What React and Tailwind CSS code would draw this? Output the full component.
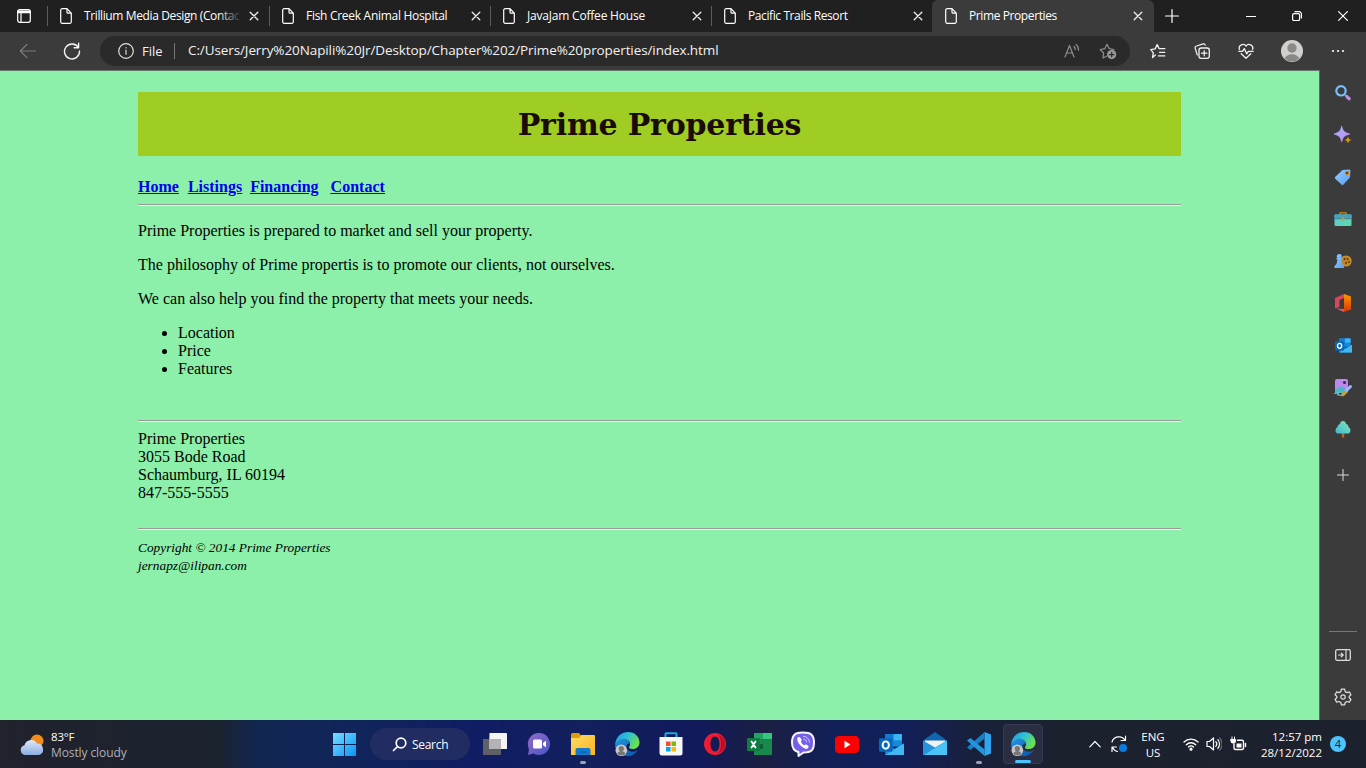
import React from "react";

const ui = "font-['Open_Sans','Noto_Sans',sans-serif]";

function Svg({ w = 16, h, box, className = "", children }) {
  return (
    <svg width={w} height={h || w} viewBox={box || `0 0 ${w} ${h || w}`} fill="none" stroke="currentColor" strokeWidth="1.2" strokeLinecap="round" strokeLinejoin="round" className={"block shrink-0 " + className}>
      {children}
    </svg>
  );
}

function Close() {
  return <Svg w={10} className="text-[#eee]"><path d="M1.2 1.2l7.6 7.6M8.8 1.2l-7.6 7.6" strokeWidth="1.3" /></Svg>;
}

function Page() {
  return <Svg w={12} h={16}><path d="M2.2.7h4.8l4.3 4.5v8.6a1.5 1.5 0 0 1-1.5 1.5H2.2A1.5 1.5 0 0 1 .7 13.8V2.2A1.5 1.5 0 0 1 2.2.7zM7 .9v3.3a1 1 0 0 0 1 1h3.2" /></Svg>;
}

const tabs = [
  ["Trillium Media Design (Contac", "w-[222px]", "tracking-[-0.38px]"],
  ["Fish Creek Animal Hospital", "w-[221px]", "tracking-[-0.29px]"],
  ["JavaJam Coffee House", "w-[221px]", "tracking-[-0.2px]"],
  ["Pacific Trails Resort", "w-[221px]", "tracking-[-0.4px]"],
];

function Tabs() {
  return (
    <div className="flex h-8 w-full bg-[#202020] text-white">
      <div className="flex w-[47px] items-center pl-[17px]">
        <Svg w={14}><rect x=".7" y=".7" width="12.6" height="12.6" rx="2" /><path d="M1 2.4h12M1 3.4h12" strokeWidth="1.8" /><path d="M4 4v9" /></Svg>
      </div>
      {tabs.map(([t, w, tr], i) => (
        <div key={t} className={`flex h-8 items-center ${w}`}>
          <div className="h-5 w-px bg-[#5c5c5c]" />
          <div className="ml-3"><Page /></div>
          <div className={`relative ml-3 w-[158px] whitespace-nowrap text-xs ${tr}`}>
            {t}
            {i === 0 && <div className="absolute right-0 top-0 h-4 w-6 bg-linear-to-r from-transparent to-[#202020]" />}
          </div>
          <div className="ml-[7px]"><Close /></div>
        </div>
      ))}
      <div className="flex h-8 w-[222px] items-center rounded-t-md bg-[#3b3b3b] pl-[13px]">
        <Page />
        <div className="ml-3 w-[156px] text-xs tracking-[-0.4px]">Prime Properties</div>
        <div className="ml-[8px]"><Close /></div>
      </div>
      <div className="flex flex-1 items-center pl-[10px]">
        <Svg w={16}><path d="M8 1.5v13M1.5 8h13" /></Svg>
        <div className="w-[66px]" />
        <Svg w={10}><path d="M.5 5.5h9" /></Svg>
        <div className="w-[36px]" />
        <Svg w={10}><rect x=".6" y="2.6" width="7" height="7" rx="1.5" /><path d="M3 .7h4a2.4 2.4 0 0 1 2.4 2.4V7" /></Svg>
        <div className="w-[36px]" />
        <Svg w={10}><path d="M.6.6l8.8 8.8M9.4.6L.6 9.4" /></Svg>
      </div>
    </div>
  );
}

function Toolbar() {
  return (
    <div className="flex h-[38px] w-full items-center bg-[#3b3b3b] text-[#f2f2f2]">
      <Svg w={18} className="ml-[19px] text-[#7d7d7d]"><path d="M16.5 9H1.5M8 2.3L1.3 9 8 15.7" /></Svg>
      <Svg w={18} className="ml-[26px]"><path d="M15.4 5.5A7.5 7.5 0 1 0 16.5 9M15.6 1.3v4.4h-4.4" strokeWidth="1.4" /></Svg>
      <div className="ml-[19px] flex h-[30px] w-[1030px] items-center rounded-full bg-[#2a2a2a] text-sm">
        <Svg w={16} className="ml-[18px] text-[#ddd]"><circle cx="8" cy="8" r="7.3" /><path d="M8 7.2v4M8 4.7v.2" /></Svg>
        <div className="ml-2 w-[32px] text-[13px]">File</div>
        <div className="h-4 w-px bg-[#777]" />
        <div className="ml-[13px] w-[870px] whitespace-nowrap text-[13.5px] tracking-[-0.1px]">C:/Users/Jerry%20Napili%20Jr/Desktop/Chapter%202/Prime%20properties/index.html</div>
        <Svg w={16} className="ml-[6px] text-[#8e8e8e]"><path d="M1 14L5.5 2.5 10 14M2.7 10h5.8M10 3.5a4 4 0 0 1 1.2 3M12.2 1.5a7 7 0 0 1 2.3 5.7" /></Svg>
        <Svg w={18} className="ml-[19px] text-[#8e8e8e]"><path d="M7.5 14.2L4 16l.6-5L1.2 7.5l4.6-.8L8 2.2l2.3 4.5 4.6.8-1 1" /><circle cx="12.7" cy="12.6" r="4.6" fill="#999" stroke="none" /><path d="M12.7 10.4v4.4M10.5 12.6h4.4" stroke="#2a2a2a" /></Svg>
      </div>
      <Svg w={16} className="ml-[20px]"><path d="M5.4 12L2.5 14.6l.8-4.8L.8 6.6l4.3-.7L7.2 1.5l2 4.2h5.6M9.5 9.3h5.3M8.5 12.9h6.3" strokeWidth="1.3" /></Svg>
      <Svg w={16} className="ml-[28px]"><rect x="5" y="5" width="10.3" height="10.3" rx="2.2" strokeWidth="1.3" /><path d="M10.2 7.5v5.3M7.5 10.2h5.4M3.3 12L1.2 5.3A1.8 1.8 0 0 1 2.5 3L9.2.9a1.8 1.8 0 0 1 2.1 1.3" /></Svg>
      <Svg w={16} className="ml-[28px]"><path d="M1.4 6.3A3.7 3.7 0 0 1 8 3.1a3.7 3.7 0 0 1 6.6 3.2M.8 8.3h3.8L6.3 5.6l2.4 5.2 1.7-2.5h4.8M3.2 10.7L8 15.2l4.8-4.5" strokeWidth="1.3" /></Svg>
      <Svg w={22} className="ml-[27px]"><circle cx="11" cy="11" r="11" fill="#d2d0ce" stroke="none" /><circle cx="11" cy="8" r="4.7" fill="#8b8986" stroke="none" /><path d="M3.7 18.8c1.5-6 13-6 14.6 0a11 11 0 0 1-14.6 0z" fill="#8b8986" stroke="none" /></Svg>
      <Svg w={14} h={4} className="ml-[28px]"><path d="M2 2h.1M7 2h.1M12 2h.1" strokeWidth="2.2" /></Svg>
    </div>
  );
}

function Defs() {
  return (
    <svg width="0" height="0" className="absolute">
      <defs>
        <linearGradient id="bp" x1="0" y1="0" x2="1" y2="1"><stop stopColor="#9bb5ff" /><stop offset="1" stopColor="#cf86f2" /></linearGradient>
        <linearGradient id="bl" x1="0" y1="0" x2="1" y2="1"><stop stopColor="#91ccff" /><stop offset="1" stopColor="#5b9df0" /></linearGradient>
        <linearGradient id="teal" x1="0" y1="0" x2="1" y2="1"><stop stopColor="#59c9dc" /><stop offset="1" stopColor="#5ddba5" /></linearGradient>
        <linearGradient id="tree" x1="1" y1="0" x2="0" y2="1"><stop stopColor="#83e6b8" /><stop offset="1" stopColor="#3fb8d0" /></linearGradient>
        <linearGradient id="win" x1="0" y1="0" x2="1" y2="1"><stop stopColor="#77ddff" /><stop offset="1" stopColor="#0895f5" /></linearGradient>
        <linearGradient id="edgeTop" x1="0" y1="0" x2="1" y2=".5"><stop stopColor="#2396df" /><stop offset=".5" stopColor="#2fc0d8" /><stop offset="1" stopColor="#6be04e" /></linearGradient>
        <linearGradient id="edgeBot" x1="0" y1="0" x2="1" y2="1"><stop stopColor="#239be4" /><stop offset="1" stopColor="#0b4fa8" /></linearGradient>
        <linearGradient id="cloud" x1="0" y1="0" x2="0" y2="1"><stop stopColor="#dce9fb" /><stop offset="1" stopColor="#8dacdf" /></linearGradient>
        <linearGradient id="folder" x1="0" y1="0" x2="1" y2="1"><stop stopColor="#ffdb68" /><stop offset="1" stopColor="#f9b51d" /></linearGradient>
        <linearGradient id="chat" x1="0" y1="0" x2="1" y2="1"><stop stopColor="#936bc4" /><stop offset="1" stopColor="#4657c5" /></linearGradient>
        <linearGradient id="office" x1="0" y1="0" x2="0" y2="1"><stop stopColor="#ff9900" /><stop offset="1" stopColor="#d63409" /></linearGradient>
      </defs>
    </svg>
  );
}

function OutlookIcon({ size = 17 }) {
  return (
    <Svg w={size} box="0 0 24 24">
      <g stroke="none">
        <path d="M6 2h16v12H6z" fill="#168ad6" /><path d="M6 2h8v6H6z" fill="#127dcc" /><path d="M14 2h8v6h-8z" fill="#3bb6f5" />
        <path d="M6 11l9 5 9-5v11H6z" fill="#1490df" /><path d="M6 22l18-11v11z" fill="#42b7ed" />
        <rect y="6" width="13" height="13" rx="1.2" fill="#0668bd" />
      </g>
      <ellipse cx="6.5" cy="12.5" rx="3" ry="3.5" stroke="#fff" strokeWidth="1.9" />
    </Svg>
  );
}

function Sidebar() {
  const icons = [
    <Svg w={18}><circle cx="7" cy="6.8" r="4.7" stroke="#79bdfa" strokeWidth="2.2" /><path d="M11.800 11.600l.6.500" stroke="#79bdfa" strokeWidth="2" /><path d="M13 12.700l2.200 2" stroke="#b890e7" strokeWidth="3.200" /></Svg>,
    <Svg w={18}><g stroke="none"><path d="M7.700 .5c1.300 4.800 2.700 6 8 7.500-5.300 1.500-6.700 2.700-8 7.700C6.400 10.700 5 9.500-.2 8 5 6.500 6.400 5.300 7.700.5z" fill="url(#bp)" stroke="url(#bp)" strokeWidth=".8" /><path d="M14 10.500c.6 2.200 1 2.700 3.500 3.500-2.500.8-2.900 1.300-3.500 3.500-.6-2.200-1-2.700-3.500-3.500 2.500-.8 2.900-1.300 3.500-3.500z" fill="#d9980f" /></g></Svg>,
    <Svg w={18}><path d="M8.500 2l6.500-.5c1 0 1.500.5 1.500 1.500l-.5 6.500-6.500 7c-.8.700-1.400.7-2 0L1.300 10.700c-.6-.6-.6-1.300 0-2z" fill="url(#bl)" stroke="none" /><circle cx="13" cy="5" r="1.700" fill="#432b11" stroke="#d28c20" /></Svg>,
    <Svg w={18}><path d="M6 5V2.800h6V5" stroke="#b77819" strokeWidth="1.500" /><rect x=".5" y="4.500" width="17" height="11.500" rx="1.200" fill="url(#teal)" stroke="none" /><path d="M.5 4.500h17v4H.5z" fill="#4c9fc0" stroke="none" /><path d="M.5 8.700h17" stroke="#32777a" strokeWidth=".8" /><circle cx="9" cy="9" r="1.600" fill="#d69a26" stroke="none" /></Svg>,
    <Svg w={18}><circle cx="12" cy="9" r="5" fill="#bd8128" stroke="#d39527" /><path d="M10.500 7h.1M13.500 7h.1M12 11h.1M15 10h.1" stroke="#553a1d" strokeWidth="1.800" /><path d="M5 2a2.300 2.300 0 0 1 2 4h1v1.500H7L8 12l2 2v2H.5v-2l2-2 1-4.500h-1V6h1A2.300 2.300 0 0 1 5 2z" fill="url(#bl)" stroke="none" /></Svg>,
    <Svg w={20}><g stroke="none"><path d="M11 1l7 2.500v13L11 19z" fill="url(#office)" /><path d="M11 1v4L6.500 7v7L2 15.500V5z" fill="#d84757" /><path d="M3 15.500L11 16v3z" fill="#ed5367" /></g></Svg>,
    <OutlookIcon size={17} />,
    <Svg w={20}><g stroke="none"><rect x="2" y="2" width="13" height="14" rx="2" fill="#bd87ed" /><path d="M2 13l6-4 7 5-1 2H2z" fill="#47baca" /><circle cx="11.500" cy="5.500" r="1.600" fill="#39294a" /></g><path d="M17.500 9.500L13 14" stroke="#9cb7fb" strokeWidth="3" /><path d="M12 15.500l-2 2" stroke="#d49a32" strokeWidth="3.500" /><path d="M1.500 16.500l4-.8-1 2 4 .8" stroke="#67c8c6" /></Svg>,
    <Svg w={18}><path d="M9 13v3.500" stroke="#a66b1d" strokeWidth="2.500" /><path d="M9 1c2 0 3 1.500 3 3 2 .5 2.500 2 2.500 3 2.500 1.500 3 6-.5 6.500H4C.5 13 1 8.500 3.500 7c0-1.500 1-2.500 2.500-3 0-1.500 1-3 3-3z" fill="url(#tree)" stroke="none" /></Svg>,
  ];
  return (
    <aside className="flex h-[650px] w-[47px] flex-col items-center border-l border-[#666] bg-[#3b3b3b] pt-[2px] text-[#ddd]">
      {icons.map((ic, i) => <div key={i} className="flex h-[42px] w-full shrink-0 items-center justify-center">{ic}</div>)}
      <div className="flex h-[50px] items-center"><Svg w={12}><path d="M6 .5v11M.5 6h11" strokeWidth="1" /></Svg></div>
      <div className="mt-auto h-px w-7 bg-[#777]" />
      <div className="flex h-[46px] items-center"><Svg w={16} h={12}><rect x=".7" y=".7" width="14.600" height="10.600" rx="1.500" strokeWidth="1.300" /><path d="M11 1v10M3.500 6h4.500M6.300 4.200L8.200 6 6.300 7.800" /></Svg></div>
      <div className="flex h-[42px] items-start pt-[10px]"><Svg w={18}><circle cx="9" cy="9" r="2.200" /><path d="M7.400 1.200h3.200l.6 2.400 1.700 1 2.400-.7 1.600 2.800L15.200 8.400v1.300l1.700 1.700-1.600 2.800-2.400-.7-1.700 1-.6 2.300H7.400l-.6-2.300-1.700-1-2.400.7-1.600-2.800 1.700-1.700V8.400L1.100 6.700l1.600-2.800 2.400.7 1.700-1z" strokeWidth="1.300" /></Svg></div>
    </aside>
  );
}

function Rule({ className }) {
  return <div className={"h-[2px] border-t border-b border-t-[#9a9a9a] border-b-[#eeeeee] " + className} />;
}

function Content() {
  return (
    <main className="h-[650px] w-[1319px] border-t border-[#6a766d] bg-[#8cf0aa] px-[138px] pt-[21px] font-['Liberation_Serif',serif] text-base leading-[18px] text-black">
      <header className="flex h-16 w-[1043px] items-center justify-center bg-[#9fcd24] pt-[2px]">
        <h1 className="whitespace-nowrap font-['DejaVu_Serif',serif] text-[30px] font-bold tracking-[-0.18px] text-[#1c0b05]">Prime Properties</h1>
      </header>
      <nav className="mt-[22px] flex font-bold text-[#0000ee] underline">
        <a>Home</a><a className="ml-[9px]">Listings</a><a className="ml-2">Financing</a><a className="ml-3">Contact</a>
      </nav>
      <Rule className="mt-[8px] w-[1043px]" />
      <p className="mt-4">Prime Properties is prepared to market and sell your property.</p>
      <p className="mt-4">The philosophy of Prime propertis is to promote our clients, not ourselves.</p>
      <p className="mt-4">We can also help you find the property that meets your needs.</p>
      <ul className="mt-4 list-disc pl-10"><li>Location</li><li>Price</li><li>Features</li></ul>
      <Rule className="mt-[42px] w-[1043px]" />
      <address className="mt-2 not-italic">Prime Properties<br />3055 Bode Road<br />Schaumburg, IL 60194<br />847-555-5555</address>
      <Rule className="mt-[26px] w-[1043px]" />
      <footer className="mt-[9px] text-[13.333px] italic">Copyright © 2014 Prime Properties<br />jernapz@ilipan.com</footer>
    </main>
  );
}

function EdgeIcon() {
  return (
    <Svg w={26} box="0 0 26 26"><g stroke="none">
      <path d="M1.200 14C2 8 7 6 11 7.500c3 1 4.500 3 4.500 5-4 0-5 6.500 1 8 3 .7 5 0 7.500-1.500C20 25 15.500 25.500 12 25 5 24.500 1 19 1.200 14z" fill="url(#edgeBot)" />
      <path d="M1.200 13.500C2 5 8 1 14 1c7 0 11.500 5 11.500 10.500 0 4-3 6.500-6.500 6.500-3 0-4.500-1-4-2 2-2 1.500-6.500-3.500-8C7.500 7 3.500 9 1.200 13.500z" fill="url(#edgeTop)" />
      <circle cx="7.300" cy="19.300" r="5.800" fill="#c9c8c7" /><circle cx="7.300" cy="17.700" r="2.600" fill="#777" /><path d="M3.300 22.800c1-3.600 7-3.600 8 0-2 2-6 2-8 0z" fill="#777" />
    </g></Svg>
  );
}

const apps = [
  <Svg w={24} h={22}><path d="M6.500 0H23q1 0 1 1v15H6z" fill="#f4f4f4" stroke="none" /><path d="M0 6h18v15q0 1-1 1H1q-1 0-1-1z" fill="#5f6065" stroke="none" /><path d="M6 6h12v10H6z" fill="#b3b3b5" stroke="none" /></Svg>,
  <Svg w={24}><path d="M12 1a11 11 0 1 1-5.500 20.500L1 23l1-6A11 11 0 0 1 12 1z" fill="url(#chat)" stroke="none" /><rect x="6" y="7.500" width="9" height="9" rx="1.500" fill="#fff" stroke="none" /><path d="M16 11l3-2.500v7L16 13z" fill="#fff" stroke="none" /></Svg>,
  <Svg w={24} h={22}><g stroke="none"><path d="M0 1.500Q0 0 1.500 0H8l2.500 3H24v6H0z" fill="#df9d08" /><path d="M0 5h8l2.500-3H23q1 0 1 1v19H0z" fill="url(#folder)" /><path d="M4.500 22v-5q0-2 2-2h11q2 0 2 2v5z" fill="#1479ca" /><path d="M8.500 19h7" stroke="#0f5ca5" /></g></Svg>,
  <EdgeIcon />,
  <Svg w={24}><path d="M6.500 6V2q0-.7.7-.7h9.600q.7 0 .7.7v4" stroke="#26a7e5" strokeWidth="2" /><path d="M.5 5h23v16q0 2.500-2.500 2.500H3Q.5 23.500.5 21z" fill="#f7f7f7" stroke="none" /><g stroke="none"><path d="M7 9.500h4.500V14H7z" fill="#f25022" /><path d="M12.500 9.500H17V14h-4.500z" fill="#7fba00" /><path d="M7 15h4.500v4.500H7z" fill="#00a4ef" /><path d="M12.500 15H17v4.500h-4.500z" fill="#ffb900" /></g></Svg>,
  <Svg w={24}><path fillRule="evenodd" d="M12 1a11 11 0 1 0 0 22 11 11 0 0 0 0-22zm0 3.500c3 0 4.500 3.500 4.500 7.500s-1.500 7.500-4.500 7.500S7.500 16 7.500 12 9 4.500 12 4.500z" fill="#ee1c32" stroke="none" /><path d="M15 2.500c5 2.500 7 5 7 9.500s-2.500 8-7 9.500c2-2 3-5 3-9.500s-1-7.500-3-9.500z" fill="#b80f26" stroke="none" /></Svg>,
  <Svg w={25} h={22}><g stroke="none"><path d="M7 0h17q1 0 1 1v20q0 1-1 1H7z" fill="#19884c" /><path d="M16 0h8q1 0 1 1v5h-9z" fill="#35c77e" /><path d="M7 11h9v5H7z" fill="#115f35" /><path d="M7 0h9v6H7z" fill="#20a564" /><rect y="5" width="13" height="13" rx="1" fill="#107c41" /></g><path d="M4.500 8.500l4 6M8.500 8.500l-4 6" stroke="#fff" strokeWidth="1.800" /></Svg>,
  <Svg w={26}><path d="M13 1.500c8 0 11 2.500 11 10 0 8-3 10-10.500 10L8.500 25v-4C4 20 2 17.500 2 11.500c0-7.500 3-10 11-10z" fill="#7360e8" stroke="#f8f5ff" strokeWidth="2" /><path d="M8.500 6C6 7 7.500 11 10 14c3 3 6 4.700 7.500 3.500 2-1.800 1-2.800-.8-3.800-1.300-.7-1.700.8-2.700.5-1.500-.7-2.500-2-3-3.500 0-.8 1.200-1 .5-2.200-1-1.700-1.700-3-3-2.500z" fill="#fff" stroke="none" /><path d="M13.500 5.300a6 6 0 0 1 6 6M13.700 8a3 3 0 0 1 3 3" stroke="#d9d2ff" strokeWidth=".9" /></Svg>,
  <Svg w={24} h={17}><rect width="24" height="17" rx="4" fill="#f00" stroke="none" /><path d="M9.500 4.700l6 3.800-6 3.800z" fill="#fff" stroke="none" /></Svg>,
  <OutlookIcon size={25} />,
  <Svg w={24}><g stroke="none"><path d="M0 8.500L12 0l12 8.500V23H0z" fill="#1166b0" /><path d="M2 8.500h20v8H2z" fill="#f2f2f2" /><path d="M0 8.500l12 7L24 8.500V22q0 1-1 1H1q-1 0-1-1z" fill="#2495dc" /><path d="M24 8.500V22q0 1-1 1H1l23-14.500z" fill="#49c4f5" /></g></Svg>,
  <Svg w={24}><g stroke="none"><path d="M17.500 0L24 2.500v19L17.500 24z" fill="#30a4ed" /><path d="M17.500 0v6.500L3.500 18 0 15.500z" fill="#1681c9" /><path d="M17.500 24v-6.500L3.500 6 0 8.500z" fill="#2295dc" /></g></Svg>,
  <EdgeIcon />,
];

function Taskbar() {
  return (
    <footer className="flex h-12 w-full bg-[linear-gradient(90deg,#20222c_0%,#1b232f_16%,#122652_19%,#11245a_26%,#101d63_35%,#12205c_43%,#11195b_51%,#1b1f42_56%,#122058_61%,#12205a_66%,#1a2038_72%,#1c212e_78%,#1c222d_100%)] text-white">
      <div className="flex w-[323px] pl-[20px] pt-[14px]">
        <Svg w={25} h={23}><circle cx="17" cy="7" r="6.500" fill="#f28c1c" stroke="none" /><path d="M5 21a5 5 0 0 1-.5-9.800A6.800 6.800 0 0 1 17 9.500a5.900 5.900 0 0 1 2 11.500z" fill="url(#cloud)" stroke="none" /></Svg>
        <div className="-mt-[5px] ml-[6px] text-xs leading-4"><div className="text-[11.500px] tracking-[-0.2px]">83°F</div><div className="whitespace-nowrap tracking-[-0.1px] text-[#aeb1b7]">Mostly cloudy</div></div>
      </div>
      <div className="flex w-[47px] items-center pl-[10px]"><Svg w={23}><path d="M0 0h11v11H0zM12 0h11v11H12zM0 12h11v11H0zM12 12h11v11H12z" fill="url(#win)" stroke="none" /></Svg></div>
      <div className="mt-2 flex h-8 w-[100px] items-center rounded-full bg-[#202c62] pl-[22px] text-xs"><Svg w={15}><circle cx="9" cy="6" r="4.800" strokeWidth="1.700" /><path d="M5.500 9.700L1.500 13.500" strokeWidth="1.700" /></Svg><span className="ml-[5px] pt-px tracking-[-0.3px]">Search</span></div>
      <div className="ml-[3px] flex">
        {apps.map((a, i) => (
          <div key={i} className="flex w-[44px] items-center justify-center">
            <div className={"relative flex h-10 w-10 items-center justify-center rounded " + (i === 12 ? "border border-[#343a50] bg-[#292e42]" : "")}>
              {a}
              {(i === 2 || i === 11) && <span className="absolute bottom-0 h-[3px] w-[6px] rounded-full bg-[#9da3b2]" />}
              {i === 12 && <span className="absolute bottom-0 h-[3px] w-4 rounded-full bg-[#4cc2ff]" />}
            </div>
          </div>
        ))}
      </div>
      <div className="ml-[44px] flex flex-1 items-center">
        <Svg w={12} h={8}><path d="M.8 6.800L6 1.500l5.200 5.300" /></Svg>
        <Svg w={18} className="ml-[9px]"><path d="M2 7a7.200 7.200 0 0 1 13-1.800M15.500 1v4.500H11M2 16.500V12h4.500M2.500 12.500a7 7 0 0 0 5 4" /><circle cx="13" cy="13" r="4" fill="#087ce0" stroke="none" /></Svg>
        <div className="ml-[12px] w-[26px] whitespace-nowrap pt-px text-center text-[11.500px] leading-4"><div>ENG</div><div>US</div></div>
        <Svg w={16} className="ml-[17px]"><path d="M1 6a10 10 0 0 1 14 0M3.300 8.700a6.700 6.700 0 0 1 9.400 0M5.500 11a3.500 3.500 0 0 1 5 0" strokeWidth="1.300" /><circle cx="8" cy="13.200" r="1" fill="#fff" /></Svg>
        <Svg w={16} className="ml-[7px]"><path d="M1 5.500h2.500L7.500 2v12l-4-3.500H1zM9.800 5.700a3.500 3.500 0 0 1 0 4.600M11.800 3.700a6.300 6.300 0 0 1 0 8.600" /><path d="M13.700 2a9 9 0 0 1 0 12" stroke="#666b76" /></Svg>
        <Svg w={17} className="ml-[8px]"><path d="M7.500 4.200H12q1.500 0 1.500 1.500v6.500q0 1.300-1.500 1.300H5.500Q4 13.500 4 12V8M15.500 7.500v3" strokeWidth="1.400" /><path d="M6.500 7.500h5v4h-5z" fill="#fff" stroke="none" /><path d="M1 3.500h4.500v2q0 1.500-1.500 1.500H2.500Q1 7 1 5.500zM2 1v2M4.500 1v2" fill="#fff" strokeWidth="1" /></Svg>
        <div className="ml-[11px] w-[64px] whitespace-nowrap pt-px text-right text-[11.500px] leading-4"><div>12:57 pm</div><div>28/12/2022</div></div>
        <div className="ml-[8px] flex h-4 w-4 items-center justify-center rounded-full bg-[#4cc2ff] text-[11px] text-[#10202c]">4</div>
      </div>
    </footer>
  );
}

export default function App() {
  return (
    <div className={`h-[768px] w-[1366px] overflow-hidden ${ui}`}>
      <Defs />
      <Tabs />
      <Toolbar />
      <div className="flex"><Content /><Sidebar /></div>
      <Taskbar />
    </div>
  );
}
